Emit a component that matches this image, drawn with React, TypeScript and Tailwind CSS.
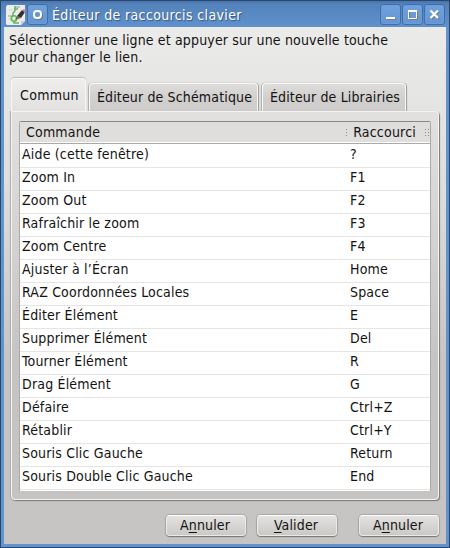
import React from "react";

const rows: [string, string][] = [
  ["Aide (cette fenêtre)", "?"],
  ["Zoom In", "F1"],
  ["Zoom Out", "F2"],
  ["Rafraîchir le zoom", "F3"],
  ["Zoom Centre", "F4"],
  ["Ajuster à l’Écran", "Home"],
  ["RAZ Coordonnées Locales", "Space"],
  ["Éditer Élément", "E"],
  ["Supprimer Élément", "Del"],
  ["Tourner Élément", "R"],
  ["Drag Élément", "G"],
  ["Défaire", "Ctrl+Z"],
  ["Rétablir", "Ctrl+Y"],
  ["Souris Clic Gauche", "Return"],
  ["Souris Double Clic Gauche", "End"],
];

function AppIcon() {
  return (
    <svg width="20" height="20" viewBox="0 0 20 20" className="shrink-0">
      <path d="M1 0H19V16L15 20H1L0 19V2Z" fill="#edeeeb" />
      <path d="M15 20V16H19Z" fill="#c9cdc9" />
      <path d="M9 2H14M2 11H7" stroke="#a9929c" strokeWidth="1" />
      <path d="M3 5H7M2 14H5" stroke="#c9d8cc" strokeWidth="1" />
      <path d="M9 1V6L7 8V11M8 4H12M8 16V18H13" stroke="#67b465" strokeWidth="1.5" fill="none" />
      <circle cx="8" cy="13.5" r="2.7" fill="#e5f2dc" stroke="#5bb951" strokeWidth="1.6" />
      <path d="M11 11L16 5L19 7L15 13Z" fill="#303131" />
      <path d="M11 11L15 13L9 15Z" fill="#6f6954" />
      <path d="M16 5L18 4L20 5L19 8Z" fill="#c489ac" />
    </svg>
  );
}

function TitleButton({ children }: { children: React.ReactNode }) {
  return (
    <div className="flex h-[21px] w-[21px] shrink-0 items-center justify-center rounded-[3px] border border-[#416ea8] bg-linear-to-b from-[#72a2dc] to-[#6295d3] shadow-[inset_0_0_0_1px_#6c9cd6]">
      {children}
    </div>
  );
}

function Tab({ label, width }: { label: string; width: string }) {
  return (
    <div className={`flex h-7 items-center justify-center rounded-t-[4px] border border-b-0 border-[#f8f8f7] bg-linear-to-b from-[#dedddc] from-0% via-[#d0cfce] via-55% to-[#cfcdcc] pl-[2px] shadow-[1px_0_1px_#999,-1px_0_1px_#aaa] ${width}`}>
      {label}
    </div>
  );
}

function PushButton({ before, mnemonic, after }: { before: string; mnemonic: string; after: string }) {
  return (
    <button className="flex h-[21px] w-20 items-center justify-center rounded-[4px] border border-[#ebeae8] border-t-white bg-linear-to-b from-[#e3e2e0] to-[#cac9c6] pr-[2px] shadow-[0_1px_1px_#777,0_0_1px_1px_#aaa9a7]">
      <span className="whitespace-pre">
        {before}
        <span className="underline underline-offset-2">{mnemonic}</span>
        {after}
      </span>
    </button>
  );
}

function Grip({ columns }: { columns: number[] }) {
  return (
    <svg width="5" height="8" viewBox="0 0 5 8" shapeRendering="crispEdges" className="shrink-0">
      {columns.map((x) => (
        <path key={x} d={`M${x} 0h1v1h-1ZM${x} 3h1v1h-1ZM${x} 6h1v1h-1Z`} fill="#8d8b89" />
      ))}
    </svg>
  );
}

export default function App() {
  return (
    <div className="flex h-[548px] w-[450px] flex-col overflow-hidden border border-[#2b4669] bg-[#6193d0] font-['DejaVu_Sans_Condensed','DejaVu_Sans',sans-serif] text-[14px] leading-[17px] tracking-[0.15px] whitespace-nowrap text-[#141312] [font-stretch:condensed]">
      <header className="flex h-[26px] shrink-0 items-center border-t-2 border-[#4a78b2] bg-linear-to-b from-[#5382b9] to-[#6091cd] pr-1 pb-px pl-[5px]">
        <AppIcon />
        <div className="ml-px flex">
          <TitleButton>
            <svg width="11" height="11" viewBox="0 0 11 11">
              <rect x="3" y="3" width="7" height="7" rx="3" fill="none" stroke="#6b7a8e" strokeWidth="2" />
              <rect x="2" y="2" width="7" height="7" rx="3" fill="#6497d5" stroke="white" strokeWidth="2" />
            </svg>
          </TitleButton>
        </div>
        <span className="ml-[4px] flex-1 pt-px tracking-[0.36px] text-white [text-shadow:1px_1px_1px_#33567f]">Éditeur de raccourcis clavier</span>
        <div className="flex gap-px">
          <TitleButton>
            <svg width="11" height="11" viewBox="0 0 11 11">
              <path d="M2 10H11" stroke="#7c7d80" strokeWidth="2" />
              <path d="M1 9H10" stroke="white" strokeWidth="2" />
            </svg>
          </TitleButton>
          <TitleButton>
            <svg width="11" height="11" viewBox="0 0 11 11">
              <path d="M2.5 2.5H10.5V10.5H2.5Z" fill="none" stroke="#777b80" />
              <path d="M1.5 1.5H9.5V9.5H1.5Z" fill="none" stroke="white" />
              <path d="M1 2H10" stroke="white" strokeWidth="2" />
            </svg>
          </TitleButton>
          <TitleButton>
            <svg width="11" height="11" viewBox="0 0 11 11">
              <path d="M2.5 2.5L10 10M10 2.5L2.5 10" stroke="#777b80" strokeWidth="2" />
              <path d="M1.5 1.5L9 9M9 1.5L1.5 9" stroke="white" strokeWidth="2.2" />
            </svg>
          </TitleButton>
        </div>
      </header>
      <main className="mx-[3px] mb-[3px] flex min-h-0 flex-1 flex-col bg-linear-to-b from-[#ebebea] via-[#dededd] via-30% to-[#c6c5c3] to-65% px-[5px] pt-[5px]">
        <p className="h-[46px]">
          Sélectionner une ligne et appuyer sur une nouvelle touche
          <br />
          pour changer le lien.
        </p>
        <div className="ml-[2px] flex h-[33px] items-end">
          <div className="z-10 mr-[3px] flex h-[33px] w-[75px] items-center justify-center rounded-t-[4px] border border-b-0 border-[#f8f8f7] bg-linear-to-b from-[#efeeed] to-[#e2e1e0] pt-px pl-[2px] tracking-[0.3px] shadow-[0_-1px_1px_#bbb]">
            Commun
          </div>
          <Tab label="Éditeur de Schématique" width="w-[169px] mr-[4px]" />
          <Tab label="Éditeur de Librairies" width="w-[144px]" />
        </div>
        <section className="ml-[2px] h-[389px] w-[428px] rounded-[4px] rounded-tl-none border border-[#f5f4f3] bg-linear-to-b from-[#e2e1e0] to-[#c6c4c2] to-65% px-[7px] pt-[9px] shadow-[1px_1px_1px_#777,-1px_0_1px_#aaa]">
          <div className="h-[370px] w-[412px] rounded-t-[2px] border-t border-r border-l border-[#aaa9a7] border-t-[#888785] bg-white">
            <div className="flex h-[22px] items-center border-b border-[#aaa9a7] bg-[#dfdedc] tracking-[0.2px] shadow-[inset_0_-1px_white]">
              <span className="w-[327px] pl-[6px]">Commande</span>
              <Grip columns={[0]} />
              <span className="w-[74px] pl-[2px]">Raccourci</span>
              <Grip columns={[0, 3]} />
            </div>
            <div className="pt-px tracking-[0.18px]">
              {rows.map(([command, key]) => (
                <div key={command} className="flex h-[23px] items-center border-b border-[#e6e5e4] pb-[3px] pl-[2px]">
                  <span className="w-[328px]">{command}</span>
                  <span>{key}</span>
                </div>
              ))}
            </div>
          </div>
        </section>
        <footer className="mt-[15px] mr-[2px] flex justify-end">
          <PushButton before="A" mnemonic="n" after="nuler" />
          <div className="w-[11px]" />
          <PushButton before="" mnemonic="V" after="alider" />
          <div className="w-[22px]" />
          <PushButton before="A" mnemonic="n" after="nuler" />
        </footer>
      </main>
    </div>
  );
}
